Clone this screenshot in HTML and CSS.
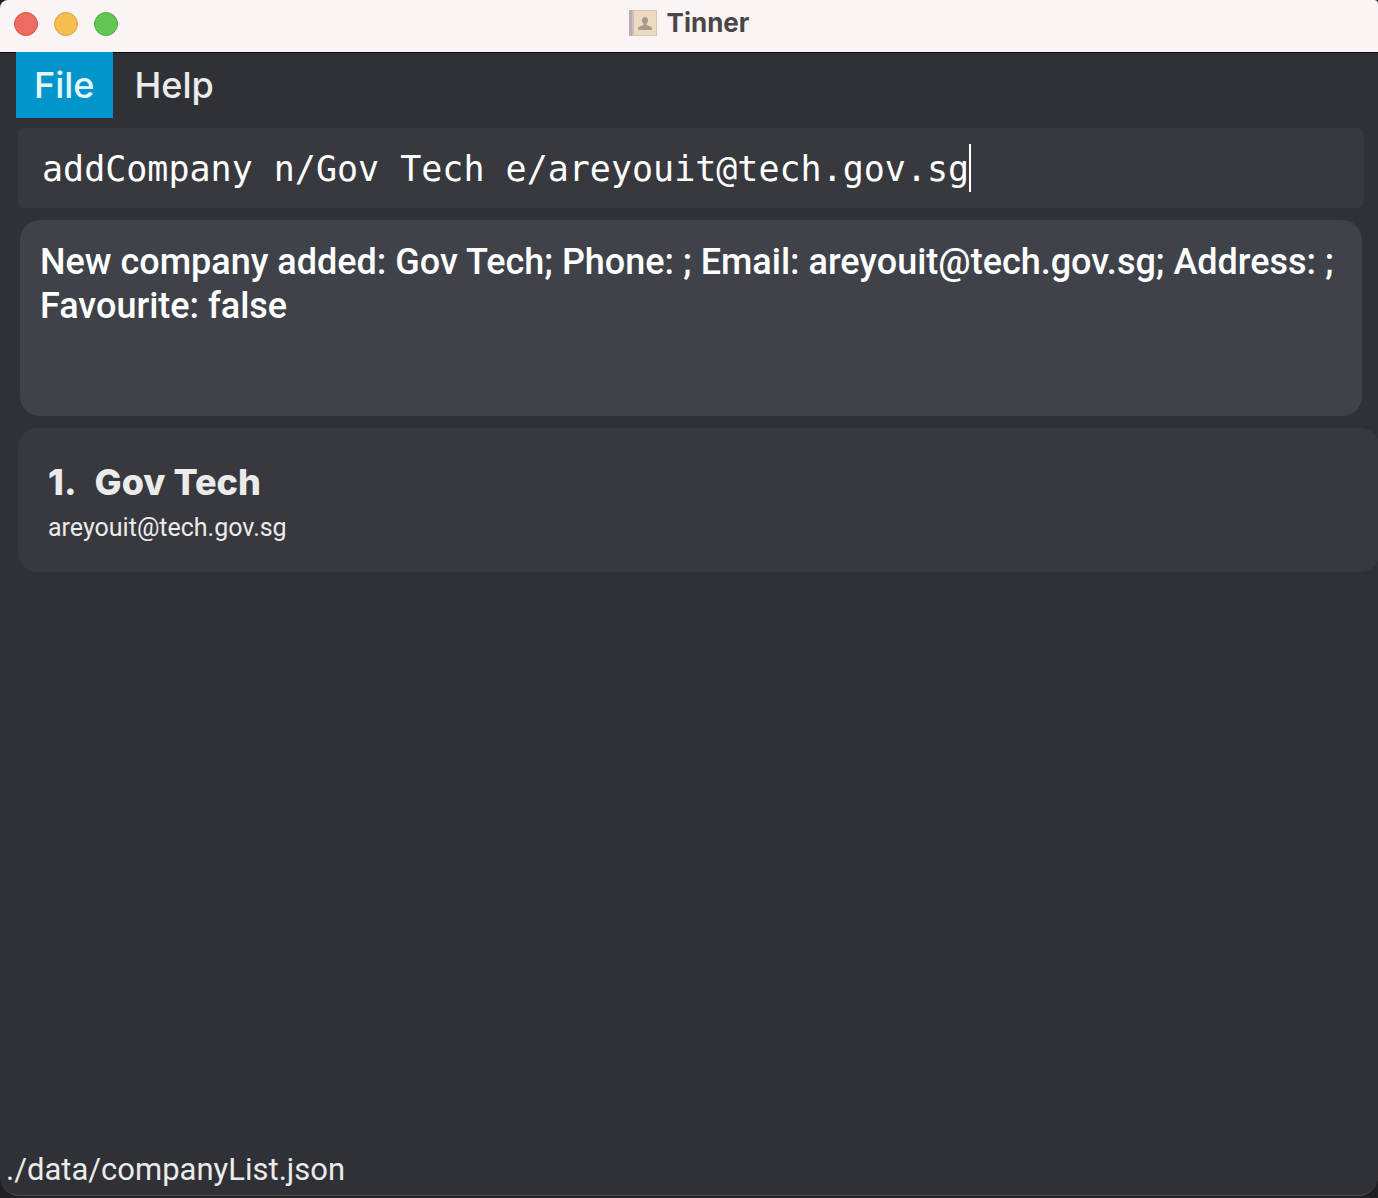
FILE: index.html
```html
<!DOCTYPE html>
<html lang="en">
<head>
<meta charset="utf-8">
<title>Tinner</title>
<link rel="stylesheet" href="styles.css">
</head>
<body>
<div class="window">
  <header class="titlebar">
    <div class="controls">
      <button class="control close" type="button" aria-label="Close"></button>
      <button class="control minimize" type="button" aria-label="Minimize"></button>
      <button class="control zoom" type="button" aria-label="Zoom"></button>
    </div>
    <h1 class="title">
      <svg class="title-icon" viewBox="0 0 28 26" aria-hidden="true">
        <rect width="28" height="26" rx="1" fill="#d9c5ac"/>
        <rect x="5" y="1" width="22" height="24" fill="#eddbc1"/>
        <rect width="5" height="26" rx="1" fill="#b9aeaf"/>
        <rect x="3" width="2" height="26" fill="#cbc0bd"/>
        <path d="M16 7c-2 0-3 1.400-3 3.200 0 1.500.6 2.600 1.400 3.300v1.300c0 1-5.400 1-5.400 4v1.200h14v-1.200c0-3-5.400-3-5.400-4v-1.300c.8-.7 1.400-1.800 1.400-3.300C19 8.400 18 7 16 7z" fill="#a99b8c"/>
      </svg>
      Tinner
    </h1>
  </header>
  <nav class="menubar">
    <button class="menu active" type="button">File</button>
    <button class="menu" type="button">Help</button>
  </nav>
  <main class="content">
    <div class="command">
      <input class="command-input" type="text" aria-label="Command" spellcheck="false" value="addCompany n/Gov Tech e/areyouit@tech.gov.sg">
      <span class="caret"></span>
    </div>
    <textarea class="result" aria-label="Result" readonly spellcheck="false">New company added: Gov Tech; Phone: ; Email: areyouit@tech.gov.sg; Address: ; Favourite: false</textarea>
    <ul class="companies">
      <li class="company">
        <h2 class="company-name"><span>1.</span><span>Gov Tech</span></h2>
        <p class="company-email">areyouit@tech.gov.sg</p>
      </li>
    </ul>
  </main>
  <footer class="statusbar">./data/companyList.json</footer>
</div>
</body>
</html>
```
FILE: styles.css
```css
* {
  box-sizing: border-box;
}

body {
  margin: 0;
  background: #201f21;
  color: #ebebeb;
  font-family: Roboto, "Liberation Sans", sans-serif;
}

.window {
  display: flex;
  flex-direction: column;
  min-height: calc(100vh - 2px);
  overflow: hidden;
  border-bottom: 1px solid #4b4b50;
  border-radius: 8px 4px 20px 20px;
  background: #303136;
}

.titlebar {
  display: grid;
  grid-template-columns: 1fr auto 1fr;
  align-items: center;
  height: 52px;
  padding: 0 14px 6px;
  background: #faf4f4;
}

.controls {
  display: flex;
  gap: 16px;
  padding-top: 2px;
}

.control {
  width: 24px;
  height: 24px;
  padding: 0;
  border: 1px solid;
  border-radius: 50%;
}

.close {
  border-color: #d9544c;
  background: #ed6b60;
}

.minimize {
  border-color: #dda33b;
  background: #f5bf4f;
}

.zoom {
  border-color: #4dab3f;
  background: #62c655;
}

.title {
  display: flex;
  align-items: center;
  gap: 10px;
  margin: 0;
  color: #4a4647;
  font: bold 26px/32px Inter, sans-serif;
}

.title-icon {
  width: 28px;
  height: 26px;
}

.menubar {
  display: flex;
  gap: 4px;
  padding: 0 16px;
  box-shadow: inset 0 1px #08080d;
}

.menu {
  height: 66px;
  padding: 0 18px;
  border: 0;
  background: transparent;
  color: #ebebeb;
  font: 500 36px/44px Inter, sans-serif;
}

.active {
  background: #0096cb;
  color: #e5f5fa;
}

.content {
  display: flex;
  flex: 1;
  flex-direction: column;
  gap: 12px;
  padding: 10px 14px 0 18px;
}

.command {
  display: flex;
  align-items: center;
  height: 80px;
  padding: 0 24px;
  border-radius: 6px;
  background: #38393e;
}

.command-input {
  width: 44ch;
  min-width: 0;
  padding: 2px 0 0;
  border: 0;
  outline: 0;
  background: transparent;
  color: #fff;
  font: 35px/48px "DejaVu Sans Mono", monospace;
}

.caret {
  width: 2px;
  height: 48px;
  background: #fff;
}

.result {
  height: 196px;
  margin: 0 2px;
  padding: 20px 20px;
  border: 0;
  border-radius: 20px;
  outline: 0;
  resize: none;
  overflow: hidden;
  background: #40424a;
  color: #fff;
  font: 500 36px/44px Roboto, sans-serif;
}

.companies {
  margin: 0 -16px 0 0;
  padding: 0;
  list-style: none;
}

.company {
  height: 144px;
  padding: 32px 30px;
  border-radius: 20px;
  background: #38393e;
}

.company-name {
  display: flex;
  gap: 18px;
  margin: 0 0 8px;
  font: 800 36px/44px Inter, sans-serif;
}

.company-email {
  margin: 0;
  font-size: 25px;
  line-height: 32px;
}

.statusbar {
  padding: 0 6px 7px;
  font-size: 31px;
  line-height: 36px;
}
```
